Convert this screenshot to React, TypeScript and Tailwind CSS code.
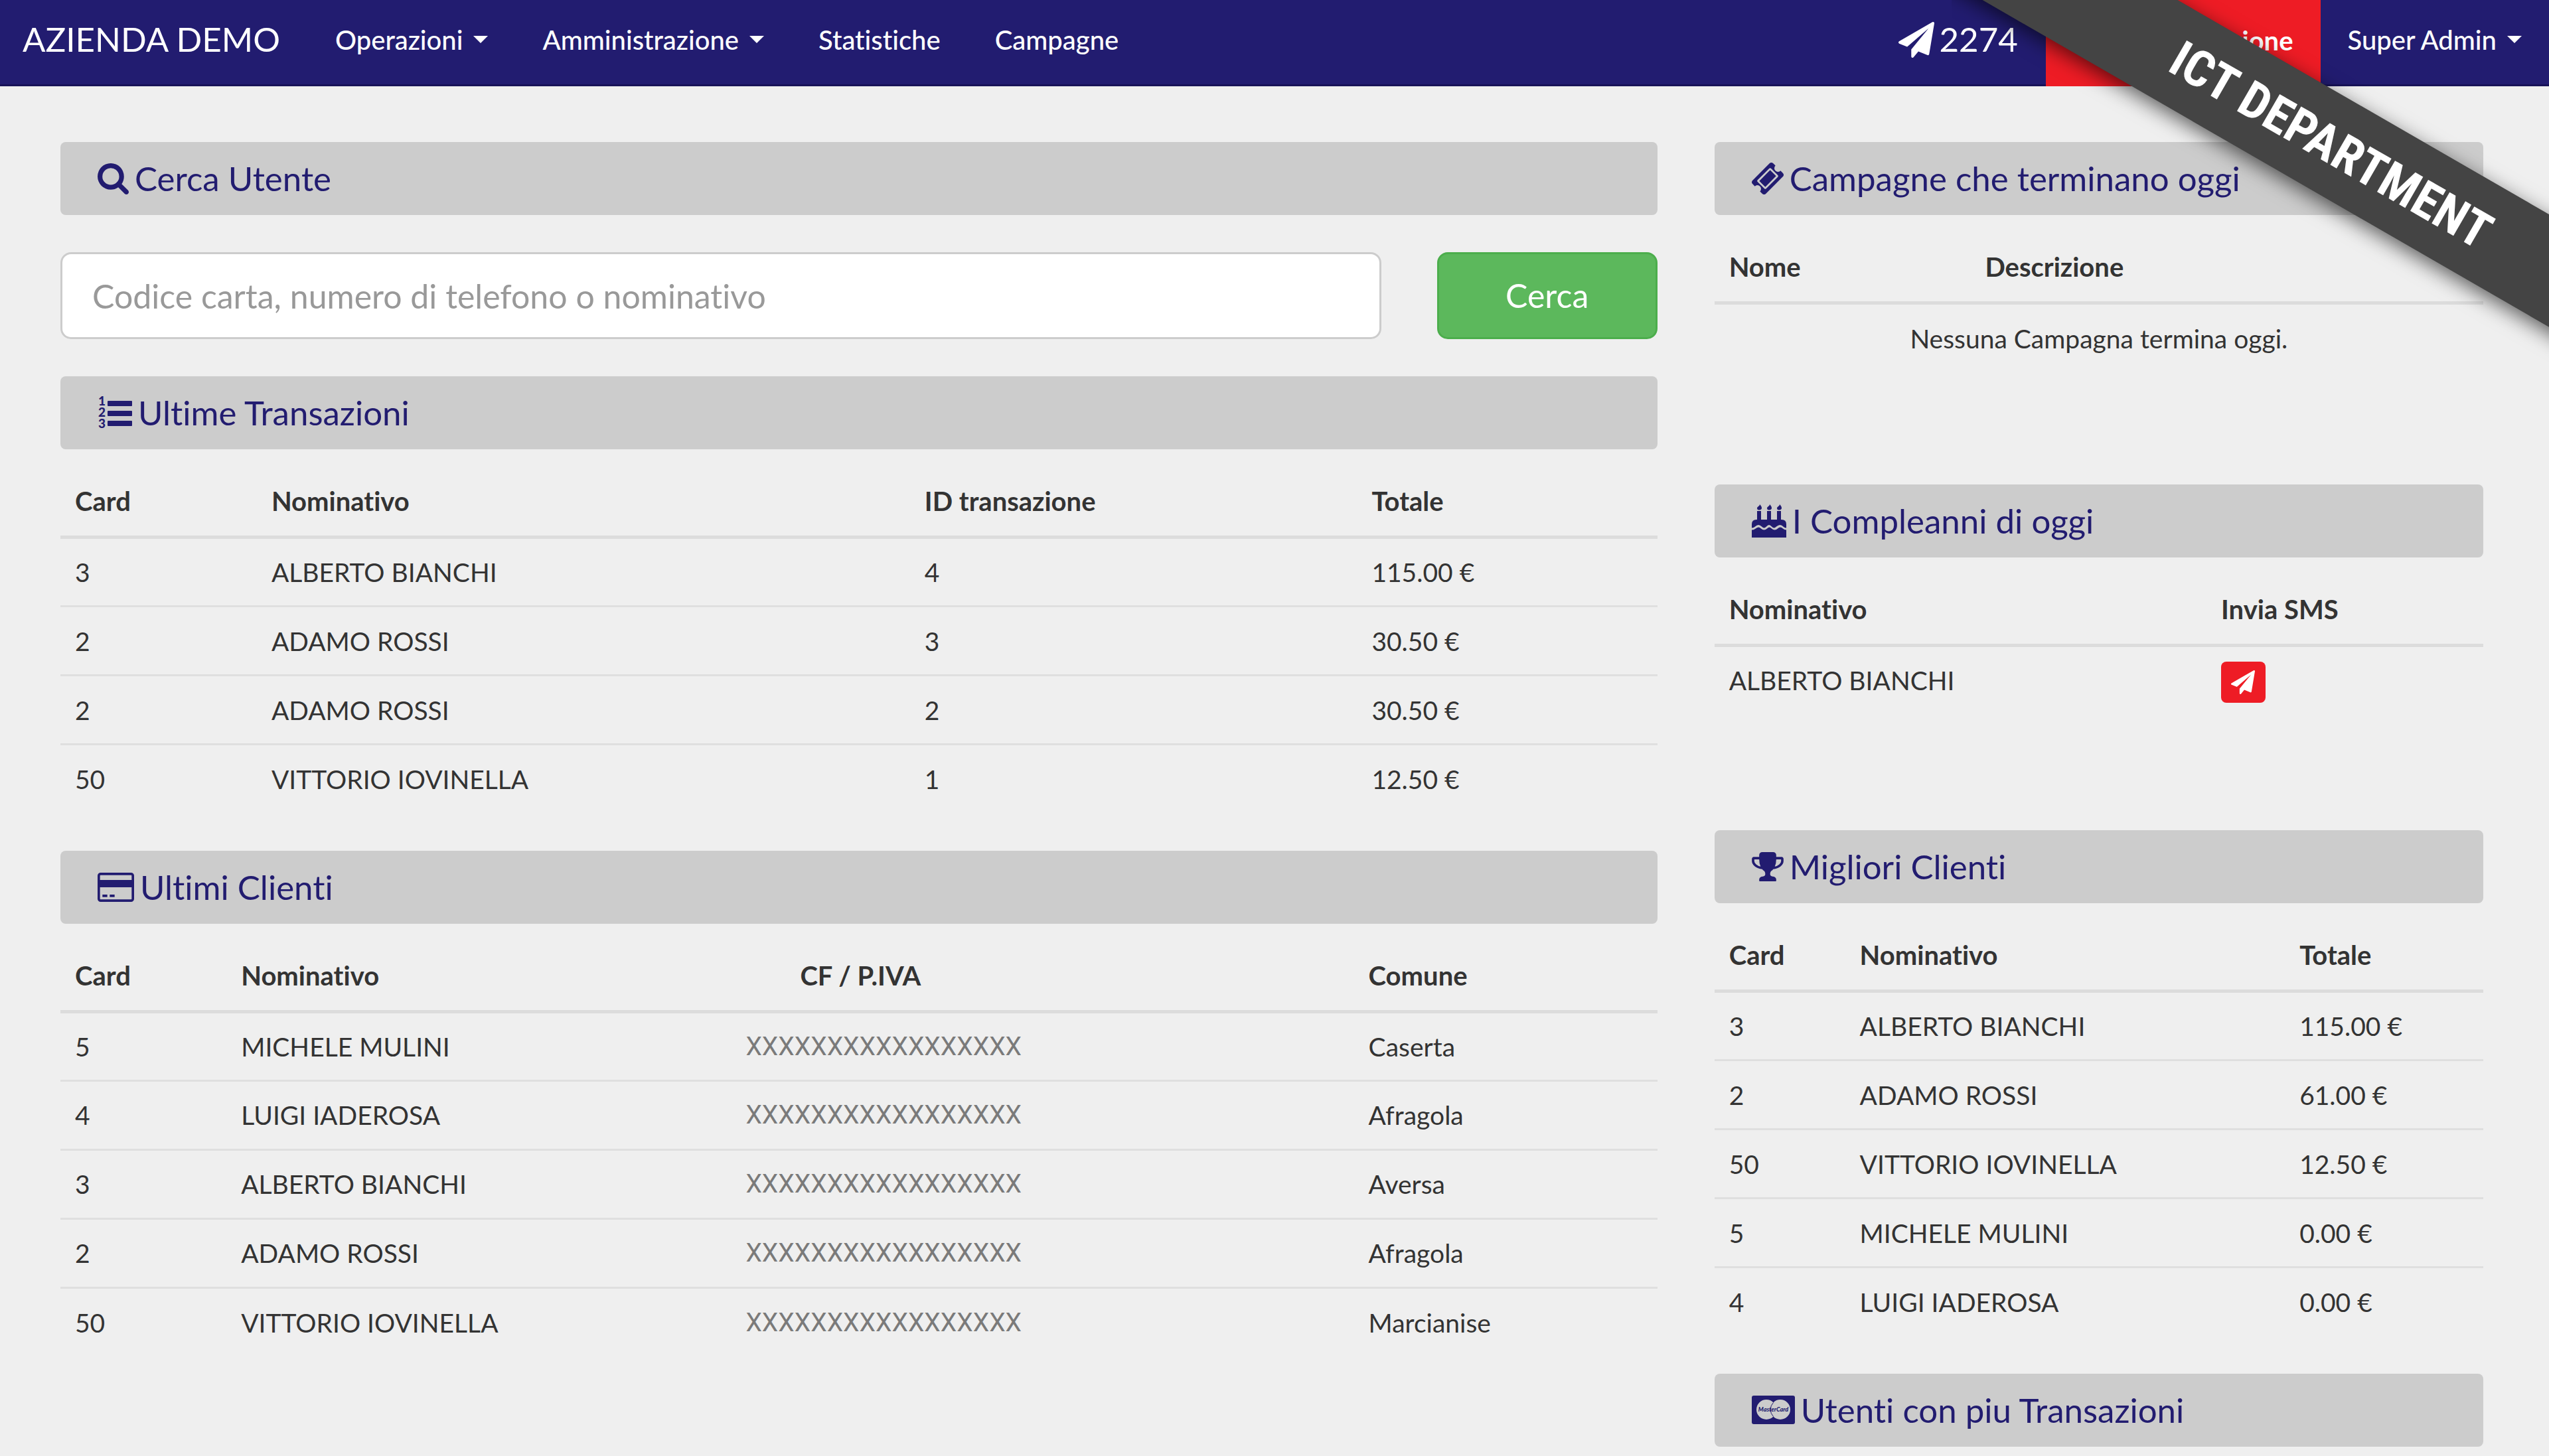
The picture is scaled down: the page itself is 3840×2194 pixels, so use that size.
import { useState } from 'react'
import type { ReactNode } from 'react'

type Column = { label: string; width: string; head?: string; cell?: string }

const TRANSACTION_COLS: Column[] = [
  { label: 'Card', width: 'w-[12.3%]' },
  { label: 'Nominativo', width: 'w-[40.9%]' },
  { label: 'ID transazione', width: 'w-[28%]' },
  { label: 'Totale', width: '' },
]

const TRANSACTIONS = [
  ['3', 'ALBERTO BIANCHI', '4', '115.00 €'],
  ['2', 'ADAMO ROSSI', '3', '30.50 €'],
  ['2', 'ADAMO ROSSI', '2', '30.50 €'],
  ['50', 'VITTORIO IOVINELLA', '1', '12.50 €'],
]

const CLIENT_COLS: Column[] = [
  { label: 'Card', width: 'w-[10.4%]' },
  { label: 'Nominativo', width: 'w-[31.6%]' },
  {
    label: 'CF / P.IVA',
    width: 'w-[39%]',
    head: 'pl-[104px]',
    cell: "font-['Roboto',sans-serif] text-[#7a7a7a]",
  },
  { label: 'Comune', width: '' },
]

const MASKED = 'XXXXXXXXXXXXXXXXX'

const CLIENTS = [
  ['5', 'MICHELE MULINI', MASKED, 'Caserta'],
  ['4', 'LUIGI IADEROSA', MASKED, 'Afragola'],
  ['3', 'ALBERTO BIANCHI', MASKED, 'Aversa'],
  ['2', 'ADAMO ROSSI', MASKED, 'Afragola'],
  ['50', 'VITTORIO IOVINELLA', MASKED, 'Marcianise'],
]

const CAMPAIGN_COLS: Column[] = [
  { label: 'Nome', width: 'w-[33.3%]' },
  { label: 'Descrizione', width: '' },
]

const BIRTHDAY_COLS: Column[] = [
  { label: 'Nominativo', width: 'w-[64%]' },
  { label: 'Invia SMS', width: '' },
]

const BEST_COLS: Column[] = [
  { label: 'Card', width: 'w-[17%]' },
  { label: 'Nominativo', width: 'w-[57.2%]' },
  { label: 'Totale', width: '' },
]

const BEST_CLIENTS = [
  ['3', 'ALBERTO BIANCHI', '115.00 €'],
  ['2', 'ADAMO ROSSI', '61.00 €'],
  ['50', 'VITTORIO IOVINELLA', '12.50 €'],
  ['5', 'MICHELE MULINI', '0.00 €'],
  ['4', 'LUIGI IADEROSA', '0.00 €'],
]

/* Icons */

function SearchIcon() {
  return (
    <svg viewBox="64 128 1664 1664" className="size-[47px]" fill="currentColor" aria-hidden="true">
      <path d="M1216 832q0-185-131.5-316.5t-316.5-131.5-316.5 131.5-131.5 316.5 131.5 316.5 316.5 131.5 316.5-131.5 131.5-316.5zm512 832q0 52-38 90t-90 38q-54 0-90-38l-343-342q-179 124-399 124-143 0-273.5-55.5t-225-150-150-225-55.5-273.5 55.5-273.5 150-225 225-150 273.5-55.5 273.5 55.5 225 150 150 225 55.5 273.5q0 220-124 399l343 343q37 37 37 90z" />
    </svg>
  )
}

function PlaneIcon({ className }: { className: string }) {
  return (
    <svg viewBox="0 0 1792 1792" className={className} fill="currentColor" aria-hidden="true">
      <path d="M1764 11q33 24 27 64l-256 1536q-5 29-32 45-14 8-31 8-11 0-24-5l-453-185-242 295q-18 23-49 23-13 0-22-4-19-7-30.500-23.500t-11.500-36.500v-349l864-1059-1069 925-395-162q-37-14-40-55-2-40 32-59l1664-960q15-9 32-9 20 0 36 11z" />
    </svg>
  )
}

function ListIcon() {
  return (
    <svg viewBox="0 0 52 52" className="size-[52px] overflow-visible" fill="currentColor" aria-hidden="true">
      <rect x="15" y="8" width="37" height="8" rx="1" />
      <rect x="15" y="23" width="37" height="8" rx="1" />
      <rect x="15" y="38" width="37" height="8" rx="1" />
      <g fontFamily="Lato, sans-serif" fontWeight="900" fontSize="19">
        <text x="1" y="15">1</text>
        <text x="1" y="32">2</text>
        <text x="1" y="49">3</text>
      </g>
    </svg>
  )
}

function CardIcon() {
  return (
    <svg viewBox="0 128 1920 1536" className="h-[44px] w-[55px]" fill="currentColor" aria-hidden="true">
      <path d="M1760 128q66 0 113 47t47 113v1216q0 66-47 113t-113 47h-1600q-66 0-113-47t-47-113v-1216q0-66 47-113t113-47h1600zm-1600 128q-13 0-22.500 9.500t-9.500 22.500v224h1664v-224q0-13-9.500-22.500t-22.500-9.500h-1600zm1600 1280q13 0 22.500-9.500t9.500-22.500v-608h-1664v608q0 13 9.500 22.500t22.500 9.500h1600zm-1504-128v-128h256v128h-256zm384 0v-128h256v128h-256z" />
    </svg>
  )
}

function TicketIcon() {
  return (
    <svg viewBox="54 54 1684 1684" className="size-[48px]" fill="currentColor" aria-hidden="true">
      <path d="M1024 452l316 316-572 572-316-316zm-211 979l618-618q19-19 19-45t-19-45l-362-362q-18-18-45-18t-45 18l-618 618q-19 19-19 45t19 45l362 362q18 18 45 18t45-18zm889-637l-907 908q-37 37-90.500 37t-90.500-37l-126-126q56-56 56-136t-56-136-136-56-136 56l-125-126q-37-37-37-90.500t37-90.500l907-906q37-37 90.500-37t90.500 37l125 125q-56 56-56 136t56 136 136 56 136-56l126 125q37 37 37 90.500t-37 90.500z" />
    </svg>
  )
}

function CakeIcon() {
  return (
    <svg viewBox="0 0 52 50" className="h-[50px] w-[52px]" fill="currentColor" aria-hidden="true">
      <path d="M0 50V38.500q3 0 5-1.500 3-2.500 5-2.500t4 2q2 2 4.500 2t4.500-2q2-2 3.500-2t3.500 2q2 2 4.500 2t4.500-2q2-2 4-2t4 2q2 2 5 2V50z" />
      <path d="M0 35.500V30q0-7 7-7h38q7 0 7 7v5.500q-2 0-4-1.500-3-3-5.500-3T37 33.500q-2 2-3.500 2T30 33.500q-2-2.500-4-2.500t-4 2.500q-2 2-3.500 2t-3.500-2Q12.500 31 10 31t-5 2.500q-2 2-5 2z" />
      <path d="M8 10h6v14H8zM23 10h6v14h-6zM38 10h6v14h-6z" />
      <path d="M12 0q3 3 3 5.500T11.500 8.500 8 5.500q0-1.500 2-2.500t2-3zM27 0q3 3 3 5.500T26.500 8.500 23 5.500q0-1.500 2-2.500t2-3zM42 0q3 3 3 5.500T41.500 8.500 38 5.500q0-1.500 2-2.500t2-3z" />
    </svg>
  )
}

function TrophyIcon() {
  return (
    <svg viewBox="64 128 1664 1536" className="h-[44px] w-[48px]" fill="currentColor" aria-hidden="true">
      <path d="M522 883q-74-162-74-371h-256v96q0 78 94.500 162t235.500 113zm1078-275v-96h-256q0 209-74 371 141-29 235.500-113t94.500-162zm128-128v128q0 71-41.500 143t-112 130-173 97.500-215.500 44.500q-42 54-95 95-38 34-52.500 72.500t-14.500 89.500q0 54 30.500 91t97.500 37q75 0 133.500 45.500t58.500 114.500v64q0 14-9 23t-23 9h-832q-14 0-23-9t-9-23v-64q0-69 58.500-114.500t133.500-45.500q67 0 97.500-37t30.500-91q0-51-14.500-89.500t-52.500-72.500q-53-41-95-95-113-5-215.500-44.500t-173-97.500-112-130-41.500-143v-128q0-40 28-68t68-28h288v-96q0-66 47-113t113-47h576q66 0 113 47t47 113v96h288q40 0 68 28t28 68z" />
    </svg>
  )
}

function MastercardIcon() {
  return (
    <svg viewBox="0 0 65 43" className="h-[43px] w-[65px]" aria-hidden="true">
      <rect width="65" height="43" rx="3" fill="currentColor" />
      <circle cx="22" cy="21" r="15" fill="#cccccc" />
      <circle cx="43" cy="21" r="15" fill="#cccccc" />
      <path d="M32.500 10.500a15 15 0 0 0 0 21" fill="none" stroke="currentColor" strokeWidth="1" />
      <text x="32.500" y="24" textAnchor="middle" fontFamily="Lato, sans-serif" fontWeight="900" fontStyle="italic" fontSize="9" fill="currentColor">
        MasterCard
      </text>
    </svg>
  )
}

function Caret() {
  return <span className="ml-4 inline-block border-x-[11px] border-t-[11px] border-x-transparent border-t-current align-middle" />
}

/* Shared pieces */

function NavLink({ children, caret }: { children: ReactNode; caret?: boolean }) {
  return (
    <a href="#" className="flex items-center px-[41px] pb-2 font-medium whitespace-nowrap">
      {children}
      {caret && <Caret />}
    </a>
  )
}

function PanelTitle({ icon, children }: { icon: ReactNode; children: ReactNode }) {
  return (
    <h2 className="flex h-[110px] items-center gap-[9px] rounded-lg bg-[#cccccc] px-14 text-[51px] leading-[56px] text-[#221c70]">
      {icon}
      {children}
    </h2>
  )
}

function DataTable({ label, columns, children }: { label: string; columns: Column[]; children: ReactNode }) {
  return (
    <table aria-label={label} className="mt-[26px] w-full table-fixed border-collapse text-left">
      <thead>
        <tr className="border-b-[5px] border-[#dcdcdc]">
          {columns.map((c) => (
            <th key={c.label} scope="col" className={`${c.width} py-[22px] leading-[60px] font-bold ${c.head ?? 'pl-[22px]'}`}>
              {c.label}
            </th>
          ))}
        </tr>
      </thead>
      <tbody className="text-[39px]">{children}</tbody>
    </table>
  )
}

function Rows({ columns, rows }: { columns: Column[]; rows: string[][] }) {
  return (
    <>
      {rows.map((row, i) => (
        <tr key={i} className="h-[104px] border-t-3 border-[#dfdfdf] first:border-t-0">
          {row.map((value, j) => (
            <td key={j} className={`pl-[22px] leading-[60px] ${columns[j].cell ?? ''}`}>
              {value}
            </td>
          ))}
        </tr>
      ))}
    </>
  )
}

function Navbar() {
  return (
    <nav className="flex h-[130px] items-stretch border-b-3 border-[#181358] bg-[#221c70] text-white">
      <a href="#" className="flex items-center pr-[42px] pb-2 pl-[34px] text-[51px] whitespace-nowrap">
        AZIENDA DEMO
      </a>
      <NavLink caret>Operazioni</NavLink>
      <NavLink caret>Amministrazione</NavLink>
      <NavLink>Statistiche</NavLink>
      <NavLink>Campagne</NavLink>
      <div className="ml-auto flex items-stretch">
        <a href="#" className="flex items-center gap-2 px-[42px] pb-2 text-[51px]">
          <PlaneIcon className="size-[54px]" />
          2274
        </a>
        <a href="#" className="-mb-[3px] flex items-center bg-[#ee1c25] px-[41px] pb-2 font-bold whitespace-nowrap">
          Nuova transazione
        </a>
        <NavLink caret>Super Admin</NavLink>
      </div>
    </nav>
  )
}

function Ribbon() {
  return (
    <div className="pointer-events-none absolute top-0 right-0 h-[640px] w-[900px] overflow-hidden">
      <div className="absolute top-[145px] -left-[128px] flex h-[147px] w-[1400px] rotate-[30deg] items-center justify-center bg-[#444444] font-['Roboto_Condensed','Roboto',sans-serif] text-[76px] font-bold whitespace-nowrap text-white shadow-[0_8px_30px_rgba(0,0,0,0.6)]">
        ICT DEPARTMENT
      </div>
    </div>
  )
}

export default function App() {
  const [query, setQuery] = useState('')

  return (
    <div className="relative min-h-screen overflow-x-hidden bg-[#efefef] font-['Lato',sans-serif] text-[40px] text-[#333333] [font-variant-ligatures:none]">
      <Navbar />

      <main className="grid grid-cols-[2405fr_1158fr] gap-x-[86px] pt-[84px] pr-[99px] pb-[14px] pl-[91px]">
        <div className="flex flex-col gap-14">
          <section>
            <PanelTitle icon={<SearchIcon />}>Cerca Utente</PanelTitle>
            <form className="mt-14 flex gap-[84px] text-[50px]" onSubmit={(e) => e.preventDefault()}>
              <input
                type="text"
                aria-label="Cerca utente"
                value={query}
                onChange={(e) => setQuery(e.target.value)}
                placeholder="Codice carta, numero di telefono o nominativo"
                className="h-[131px] min-w-0 flex-1 rounded-2xl border-3 border-[#cccccc] bg-white px-[45px] placeholder:text-[#999999]"
              />
              <button type="submit" className="w-[332px] rounded-2xl border-3 border-[#4cae4c] bg-[#5cb85c] text-white">
                Cerca
              </button>
            </form>
          </section>

          <section>
            <PanelTitle icon={<ListIcon />}>Ultime Transazioni</PanelTitle>
            <DataTable label="Ultime Transazioni" columns={TRANSACTION_COLS}>
              <Rows columns={TRANSACTION_COLS} rows={TRANSACTIONS} />
            </DataTable>
          </section>

          <section>
            <PanelTitle icon={<CardIcon />}>Ultimi Clienti</PanelTitle>
            <DataTable label="Ultimi Clienti" columns={CLIENT_COLS}>
              <Rows columns={CLIENT_COLS} rows={CLIENTS} />
            </DataTable>
          </section>
        </div>

        <div className="flex flex-col">
          <section className="min-h-[516px]">
            <PanelTitle icon={<TicketIcon />}>Campagne che terminano oggi</PanelTitle>
            <DataTable label="Campagne che terminano oggi" columns={CAMPAIGN_COLS}>
              <tr className="h-[104px]">
                <td colSpan={2} className="text-center">
                  Nessuna Campagna termina oggi.
                </td>
              </tr>
            </DataTable>
          </section>

          <section className="min-h-[521px]">
            <PanelTitle icon={<CakeIcon />}>I Compleanni di oggi</PanelTitle>
            <DataTable label="I Compleanni di oggi" columns={BIRTHDAY_COLS}>
              <tr className="align-top">
                <td className="py-5 pl-[22px] leading-[60px]">ALBERTO BIANCHI</td>
                <td className="py-[22px] pl-[22px]">
                  <button type="button" aria-label="Invia SMS" className="flex h-[62px] w-[67px] items-center justify-center rounded-lg bg-[#ee1c25] text-white">
                    <PlaneIcon className="size-[36px]" />
                  </button>
                </td>
              </tr>
            </DataTable>
          </section>

          <section className="mb-14">
            <PanelTitle icon={<TrophyIcon />}>Migliori Clienti</PanelTitle>
            <DataTable label="Migliori Clienti" columns={BEST_COLS}>
              <Rows columns={BEST_COLS} rows={BEST_CLIENTS} />
            </DataTable>
          </section>

          <section>
            <PanelTitle icon={<MastercardIcon />}>Utenti con piu Transazioni</PanelTitle>
          </section>
        </div>
      </main>

      <Ribbon />
    </div>
  )
}
